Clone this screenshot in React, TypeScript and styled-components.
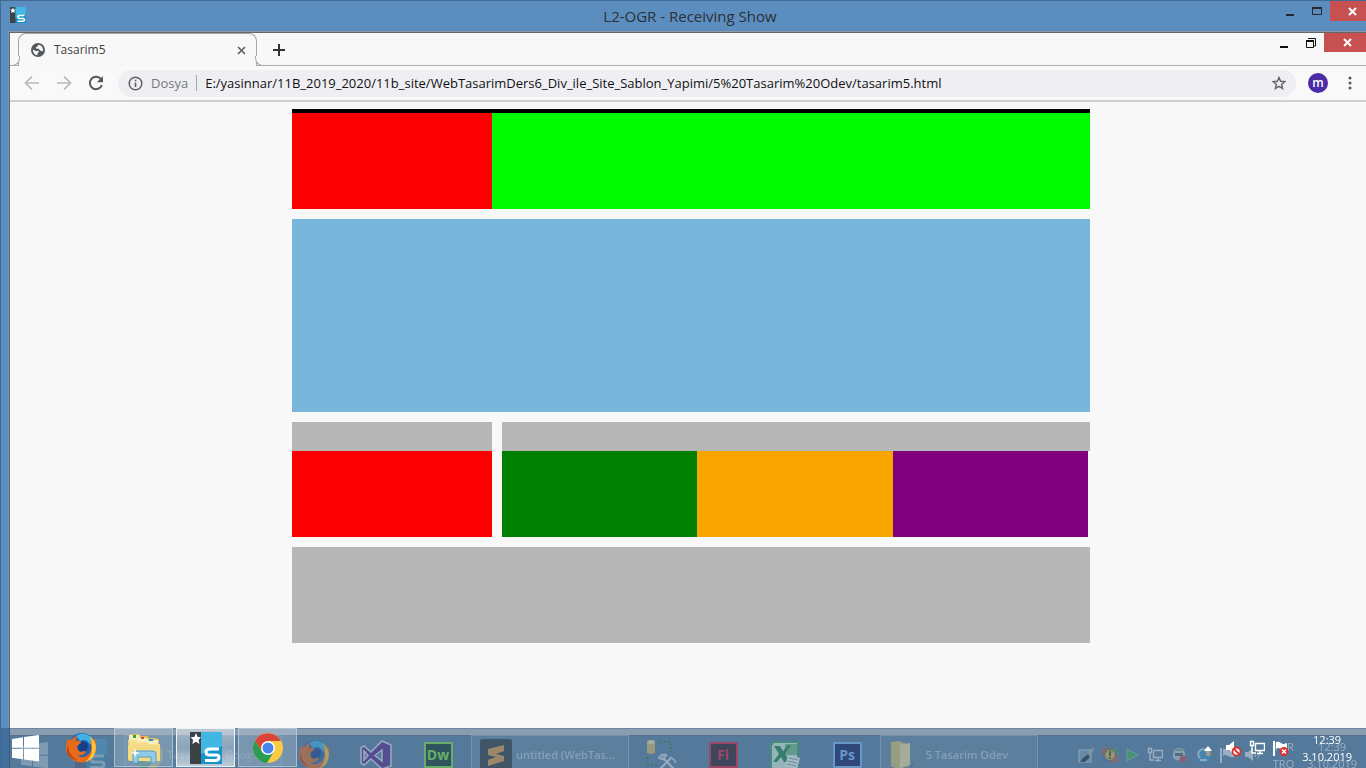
import React from 'react';
import styled, { createGlobalStyle, css } from 'styled-components';

const GlobalStyle = createGlobalStyle`
  * { box-sizing: border-box; }
  body {
    margin: 0;
    background: #5b8ebf;
    font-family: 'Open Sans', 'Noto Sans', sans-serif;
    overflow: hidden;
  }
  button {
    border: 0;
    padding: 0;
    margin: 0;
    background: none;
    font: inherit;
    color: inherit;
  }
  svg { display: block; flex: none; }
`;

/* ---------- Outer window ---------- */

const Desktop = styled.div`
  position: relative;
  display: flex;
  flex-direction: column;
  height: 100vh;
  background: #5b8ebf;
  border-top: 1px solid #416a95;
  border-left: 1px solid #416a95;
  overflow: hidden;
`;

const TitleBar = styled.header`
  display: grid;
  grid-template-columns: 1fr auto 1fr;
  flex: none;
  height: 30px;
  padding-left: 9px;
`;

const TitleIcon = styled.span`
  padding-top: 6px;
`;

const Title = styled.h1`
  margin: 0;
  padding-left: 4px;
  font-size: 15px;
  font-weight: 400;
  line-height: 30px;
  color: #2b3036;
`;

const WindowButtons = styled.div<{ $inner?: boolean }>`
  display: flex;
  justify-content: flex-end;
  align-items: flex-start;
  margin-left: auto;
  color: ${p => (p.$inner ? '#111' : '#24282e')};
`;

const WindowButton = styled.button<{ $inner?: boolean }>`
  display: flex;
  align-items: center;
  justify-content: center;
  width: 27px;
  height: ${p => (p.$inner ? 19 : 20)}px;
`;

const CloseButton = styled(WindowButton)`
  width: ${p => (p.$inner ? 42 : 36)}px;
  padding-left: ${p => (p.$inner ? 4 : 9)}px;
  background: #c75050;
  color: #fff;
`;

/* ---------- Browser ---------- */

const Browser = styled.section`
  display: flex;
  flex-direction: column;
  flex: 1;
  min-height: 0;
  margin-left: 7px;
  padding: 1px 0 0 1px;
  border-top: 1px solid #8c9aa6;
  border-left: 1px solid #7793b0;
  background: #666;
`;

const TabStrip = styled.div`
  display: flex;
  flex: none;
  height: 33px;
  background: #f8f8f8;
  box-shadow: inset 0 -1px #adadad;
`;

const Tab = styled.div`
  position: relative;
  display: flex;
  align-items: center;
  width: 239px;
  margin-left: 8px;
  padding: 0 10px 0 12px;
  border: 1px solid #a6a6a6;
  border-bottom: 0;
  border-radius: 8px 8px 0 0;
  background: #f8f8f8;
  color: #5f6368;

  &::before,
  &::after {
    content: '';
    position: absolute;
    bottom: 0;
    width: 9px;
    height: 9px;
    border-bottom: 1px solid #a6a6a6;
    background: #f8f8f8;
  }
  &::before {
    left: -9px;
    border-right: 1px solid #a6a6a6;
    border-bottom-right-radius: 8px;
  }
  &::after {
    right: -9px;
    border-left: 1px solid #a6a6a6;
    border-bottom-left-radius: 8px;
  }
`;

const TabTitle = styled.span`
  flex: 1;
  padding-left: 9px;
  font-size: 12px;
  line-height: 16px;
  color: #3c4043;
`;

const NewTab = styled.button`
  display: flex;
  align-items: center;
  margin-left: 16px;
  color: #333;
`;

const Toolbar = styled.nav`
  display: flex;
  align-items: center;
  flex: none;
  height: 36px;
  padding: 0 14px;
  border-bottom: 2px solid #d0d0d0;
  background: #f9f9f9;
`;

const NavButtons = styled.div`
  display: flex;
  gap: 16px;
  margin-right: 14px;
`;

const NavButton = styled.button<{ $muted?: boolean }>`
  color: ${p => (p.$muted ? '#b6b8ba' : '#55585c')};
`;

const Omnibox = styled.div`
  display: flex;
  align-items: center;
  flex: 1;
  height: 27px;
  margin-right: 12px;
  padding: 0 10px;
  border-radius: 14px;
  background: #efeff3;
  color: #5f6368;
`;

const Scheme = styled.label`
  margin-left: 8px;
  padding-right: 8px;
  border-right: 1px solid #a5a7aa;
  font-size: 13px;
  line-height: 16px;
  color: #74777b;
`;

const Address = styled.input`
  flex: 1;
  min-width: 0;
  padding: 0 0 0 8px;
  border: 0;
  outline: 0;
  background: transparent;
  font: 13px/18px 'Open Sans', 'Noto Sans', sans-serif;
  color: #111;
`;

const Avatar = styled.button`
  width: 20px;
  height: 20px;
  margin-right: 20px;
  border-radius: 50%;
  background: #4d2aa6;
  font-size: 12px;
  font-weight: 600;
  line-height: 18px;
  color: #fff;
`;

const Page = styled.main`
  flex: 1;
  min-height: 0;
  padding: 7px 0 0 6px;
  background: #f8f8f8;
`;

const Site = styled.div`
  display: flex;
  flex-direction: column;
  gap: 10px;
  width: 100%;
  max-width: 798px;
  margin: 0 auto;
`;

const SiteHeader = styled.div`
  display: flex;
  border-top: 4px solid #000;
`;

const Block = styled.div<{ $color: string; $height: number }>`
  height: ${p => p.$height}px;
  background: ${p => p.$color};
`;

const SideColumn = styled.div`
  flex: 0 0 200px;
`;

const MainColumn = styled.div`
  flex: 1;
`;

const Columns = styled.div`
  display: flex;
  gap: 10px;
`;

const ColorRow = styled.div`
  display: grid;
  grid-template-columns: repeat(3, 1fr);
  padding-right: 2px;
`;

/* ---------- Taskbar ---------- */

const Taskbar = styled.footer`
  position: absolute;
  inset: auto 0 0 -1px;
  height: 40px;
  overflow: hidden;
  background: linear-gradient(#70859e 1px, #899db1 1px 7px, #52728f 7px 8px, #55799a 8px);
`;

const EdgeShade = styled.span`
  position: absolute;
  inset: 0 auto 0 0;
  width: 10px;
  border-right: 1px solid #405b76;
  background: #41709f;
`;

const Layer = styled.div<{ $ghost?: boolean }>`
  position: absolute;
  display: flex;
  inset: 0;
  color: #fff;
  ${p =>
    p.$ghost &&
    css`
      inset: 7px 0 -7px;
      padding-left: 9px;
      opacity: 0.5;
    `}
`;

const StartButton = styled.button<{ $ghost?: boolean }>`
  display: flex;
  align-items: center;
  justify-content: center;
  width: ${p => (p.$ghost ? 51 : 50)}px;
  opacity: ${p => (p.$ghost ? 0.5 : 1)};
`;

const Slot = styled.button<{ $state?: 'open' | 'active'; $faint?: boolean }>`
  display: flex;
  align-items: center;
  justify-content: center;
  width: 62px;
  opacity: ${p => (p.$faint ? 0.5 : 1)};
  ${p =>
    p.$state &&
    css`
      width: 59px;
      margin: 0 1px 1px 2px;
      border: 1px solid ${p.$state === 'active' ? '#eef3f7' : 'rgba(205, 220, 232, 0.6)'};
      background: ${p.$state === 'active'
        ? 'linear-gradient(rgba(255,255,255,.45), rgba(255,255,255,.3) 50%, rgba(255,255,255,.6))'
        : 'rgba(200, 215, 230, 0.28)'};
    `}
`;

const TaskButton = styled.button<{ $faint?: boolean }>`
  display: flex;
  align-items: center;
  gap: 4px;
  width: 158px;
  margin: 0 1px 0 2px;
  padding: 0 8px;
  border: 1px solid rgba(190, 210, 228, 0.55);
  background: rgba(150, 175, 195, 0.25);
  font-size: 11px;
  font-weight: 600;
  line-height: 16px;
  color: #b4c6d6;
  white-space: nowrap;
  opacity: ${p => (p.$faint ? 0.6 : 1)};
`;

const Tray = styled.div<{ $ghost?: boolean }>`
  display: flex;
  align-items: center;
  gap: 8px;
  margin-left: auto;
  padding-right: ${p => (p.$ghost ? 9 : 14)}px;
  opacity: ${p => (p.$ghost ? 0.8 : 1)};
`;

const TrayIcons = styled.div`
  display: flex;
  align-items: center;
  gap: 8px;
  margin-right: 5px;
`;

const Overflow = styled.button`
  margin-right: 5px;
`;

const TrayText = styled.div`
  font-size: 11px;
  line-height: 17px;
  text-align: center;
`;

const Clock = styled(TrayText)`
  margin-left: 5px;
`;

/* ---------- Icons ---------- */

const Svg = ({ w = 16, h = w, box, children }: { w?: number; h?: number; box?: string; children: React.ReactNode }) => (
  <svg width={w} height={h} viewBox={box || `0 0 ${w} ${h}`} fill="none" aria-hidden="true">
    {children}
  </svg>
);

const SchoolIcon = ({ size = 32 }: { size?: number }) => (
  <Svg w={size} box="0 0 32 32">
    <path d="M0 0H12V32H0z" fill="#3d4247" />
    <path d="M11 0H32V32H11z" fill="#1594ca" />
    <path d="M11 0H32V14L11 22z" fill="#43b7e4" />
    <path d="M29 17H19.500Q16 17 16 20T19.500 23H26Q29 23 29 25.500T26 28.500H15" stroke="#fff" strokeWidth="3" />
    <path d="M6 1L7.600 5 11 5.200 8.500 8 9.500 12 6 9.800 2.200 12 3.200 8 0.500 5.200 4.400 5z" fill="#fff" />
  </Svg>
);

const CrossIcon = ({ size = 9, width = 2 }: { size?: number; width?: number }) => (
  <Svg w={size} box="0 0 9 9">
    <path d="M1 1L8 8M8 1L1 8" stroke="currentColor" strokeWidth={width} />
  </Svg>
);

const MinimizeIcon = () => (
  <Svg w={8} h={10}><path d="M0 9H8" stroke="currentColor" strokeWidth="2" /></Svg>
);

const MaximizeIcon = () => (
  <Svg w={10} h={8}><path d="M.5 1V7.500H9.500V1" stroke="currentColor" /><path d="M0 1H10" stroke="currentColor" strokeWidth="2" /></Svg>
);

const RestoreIcon = () => (
  <Svg w={10}><path d="M2 .5H9.500V8H8M.5 3V9.500H7.500V3" stroke="currentColor" /><path d="M0 3H8" stroke="currentColor" strokeWidth="2" /></Svg>
);

const GlobeIcon = () => (
  <Svg w={14} box="0 0 14 14">
    <circle cx="7" cy="7" r="7" fill="#55595e" />
    <path d="M2 6.500L5.200 8.300 7 7.600 8 9 6.500 10.200V12.300C3.800 12 1.800 9.600 2 6.500zM7.500 1.800L6.500 3.500 4.800 4.300 5.500 5.800 8 5.700 9 7.500 11.900 8.200C12.500 5.200 10.700 2.200 7.500 1.800z" fill="#f8f8f8" />
  </Svg>
);

const ArrowIcon = ({ right }: { right?: boolean }) => (
  <Svg w={16}>
    <path d={right ? 'M1 8H14M8 1.500L14.500 8 8 14.500' : 'M15 8H2M8 1.500L1.500 8 8 14.500'} stroke="currentColor" strokeWidth="1.700" />
  </Svg>
);

const ReloadIcon = () => (
  <Svg w={16}>
    <path d="M13 4.200A6.200 6.200 0 1 0 13.900 10" stroke="currentColor" strokeWidth="2" />
    <path d="M15 1V7.200H8.800z" fill="currentColor" />
  </Svg>
);

const InfoIcon = () => (
  <Svg w={15} box="0 0 15 15">
    <circle cx="7.500" cy="7.500" r="6.300" stroke="currentColor" strokeWidth="1.500" />
    <path d="M7.500 6.500V11M7.500 3.700V5.300" stroke="currentColor" strokeWidth="1.600" />
  </Svg>
);

const StarIcon = () => (
  <Svg w={14}>
    <path d="M7 1.500L8.600 5.300 12.800 5.700 9.600 8.400 10.600 12.500 7 10.300 3.400 12.500 4.400 8.400 1.200 5.700 5.400 5.300z" stroke="currentColor" strokeWidth="1.400" />
  </Svg>
);

const DotsIcon = () => (
  <Svg w={4} h={14}>
    <circle cx="2" cy="2" r="1.500" fill="#54575b" /><circle cx="2" cy="7" r="1.500" fill="#54575b" /><circle cx="2" cy="12" r="1.500" fill="#54575b" />
  </Svg>
);

const WindowsIcon = () => (
  <Svg w={27} box="0 0 27 27">
    <path d="M0 4L11 2.300V12.700H0zM12 2.100L27 0V12.700H12zM0 13.700H11V24.300L0 22.800zM12 13.700H27V26.500L12 24.500z" fill="#fff" />
  </Svg>
);

const FirefoxIcon = () => (
  <Svg w={32} box="0 0 32 32">
    <circle cx="17" cy="14" r="13" fill="#1f63b5" />
    <path d="M11 4Q17-1 25 4Q28 9 25 13Q22 6 15 9z" fill="#3fb3e6" />
    <path d="M14 11Q19 7 23 12Q24 17 19 20L13 19z" fill="#173f86" />
    <path d="M3 7Q5 9 7 7Q10 4 12 4L11 9Q16 8 16 11L12 14Q12 19 16 20Q20 18 21 20Q17 25 12 23Q18 28 24 22Q28 17 25 9Q30 11 30 5Q34 20 25 28Q17 33 8 28Q-3 20 3 7z" fill="#e66a19" />
    <path d="M25 4Q30 8 31 15Q31 27 20 30Q28 24 27 15Q27 9 25 4z" fill="#fbc43b" />
    <path d="M3 13Q3 23 12 28Q-1 25 3 13z" fill="#c73a12" />
  </Svg>
);

const ExplorerIcon = () => (
  <Svg w={34} h={32}>
    <path d="M2 4L3 2H12L14 4H21L22 6H30L32 8V26H2z" fill="#dfbd5c" />
    <path d="M2 3H12L13 6H20L21 8H31V12H2z" fill="#f9eec0" />
    <path d="M6 3H9V6H6z" fill="#2fa82f" /><path d="M14 5H17V7H14z" fill="#d34734" /><path d="M22 7H26V9H22z" fill="#2b8fd3" />
    <path d="M1 8H9L11 10H20L22 12H33V29H3z" fill="#f6df8e" />
    <path d="M1 13H33V28Q33 29 31 29H3Q1 29 1 27z" fill="#f3da83" />
    <path d="M6 22Q6 19 9 19H26Q29 19 29 22V31H24V25H11V31H6z" fill="#8dcbe6" stroke="#5b9dc2" />
    <path d="M8 16L9 20 13 21 9 22 8 26 7 22 4 21 7 20z" fill="#fff" />
  </Svg>
);

const ChromeIcon = () => (
  <Svg w={30} box="0 0 30 30">
    <circle cx="15" cy="15" r="15" fill="#fccb44" />
    <path d="M2 7.500A15 15 0 0 1 28 8H15L9 18.500z" fill="#d9453a" />
    <path d="M2 7.500A15 15 0 0 0 14 30L21 18.500H9z" fill="#2c9c51" />
    <circle cx="15" cy="15" r="7" fill="#fff" /><circle cx="15" cy="15" r="5.500" fill="#4585ee" />
  </Svg>
);

const VisualStudioIcon = () => (
  <Svg w={32} h={30}>
    <path d="M22 1L31 5V26L22 29 11 19 4 25 1 23V8L4 6 11 12zM22 10L15 15.500 22 21zM4 11V20L8 15.500z" fill="#522487" stroke="#e2dceb" strokeWidth="1.500" fillRule="evenodd" />
  </Svg>
);

const AdobeTile = styled.span<{ $edge: string; $fill: string }>`
  display: flex;
  align-items: center;
  justify-content: center;
  width: 29px;
  height: 26px;
  border: 2px solid ${p => p.$edge};
  background: ${p => p.$fill};
  font-size: 14px;
  font-weight: 700;
  line-height: 20px;
  color: ${p => p.$edge};
`;

const SublimeIcon = () => (
  <Svg w={32} h={32}>
    <rect width="32" height="32" rx="2" fill="#2e3338" />
    <path d="M8 10L24 6V12L16 15 24 17V22L8 27V21L16 18 8 16z" fill="#e3973a" />
  </Svg>
);

const ToolsIcon = () => (
  <Svg w={32} h={32}>
    <path d="M2 3Q6 0 10 3V14Q6 16 2 14z" fill="#dcb860" /><ellipse cx="6" cy="3" rx="4" ry="2" fill="#f5e29c" />
    <path d="M15 3H26V13M2 18V26H14" stroke="#237f35" strokeWidth="2" strokeDasharray="2 2" />
    <path d="M18 19L30 31M26 19L14 31" stroke="#d8dfe5" strokeWidth="2" /><path d="M13 19Q17 13 22 16L18 21zM25 18L29 20 31 24" fill="#aeb9c4" stroke="#eef2f5" />
  </Svg>
);

const ExcelIcon = () => (
  <Svg w={30} h={29}>
    <path d="M3 1H28V28H1V5z" fill="#d5eedb" stroke="#3aa05b" strokeWidth="2" />
    <path d="M15 3H27V14H15z" fill="#70bd84" />
    <path d="M4 5H10L13 10 18 4H21L15 13 20 21H14L11 16 7 21H3L9 13z" fill="#16863b" />
    <path d="M18 14L30 17 27 28 15 25z" fill="#f4f8f5" /><path d="M19 17L28 19M18 20L27 22M17 23L26 25" stroke="#79a486" />
  </Svg>
);

const FolderIcon = () => (
  <Svg w={27} h={30}>
    <path d="M2 2L10 1 20 5V26L9 29 2 26z" fill="#e2c768" /><path d="M10 5L21 3V25L11 28z" fill="#f5e29b" /><path d="M2 2L11 6V29L2 26z" fill="#dbc06b" /><path d="M22 26L26 22 22 28z" fill="#46545f" />
  </Svg>
);

const SpeakerIcon = ({ muted }: { muted?: boolean }) => (
  <Svg w={16}>
    <path d="M1 5H4L9 1V14L4 10H1z" fill="#fff" />
    {muted ? (
      <><circle cx="11.500" cy="11.500" r="4" fill="#fff" stroke="#df3030" strokeWidth="1.800" /><path d="M9 9L14 14" stroke="#df3030" strokeWidth="1.800" /></>
    ) : (
      <path d="M11 5Q13 7.500 11 10M13 3Q17 7.500 13 12" stroke="#fff" />
    )}
  </Svg>
);

const NetworkIcon = () => (
  <Svg w={16}>
    <path d="M6.500 3.500H15.500V10.500H6.500zM8 13.500H14M11 11V13" stroke="#fff" strokeWidth="1.400" />
    <path d="M1.500 1.500H4.500V5.500H1.500zM3 6V13H7" stroke="#fff" strokeWidth="1.400" />
  </Svg>
);

const FlagIcon = ({ alert }: { alert?: boolean }) => (
  <Svg w={16}>
    <path d="M1 1V16" stroke="#fff" strokeWidth="2" /><path d="M3 2Q6 1 8 3T14 3V10Q11 11 8 9T3 9z" fill="#fff" />
    {alert && <><circle cx="11" cy="11.500" r="4.500" fill="#e02f2f" /><path d="M9 9.500L13 13.500M13 9.500L9 13.500" stroke="#fff" strokeWidth="1.500" /></>}
  </Svg>
);

const UpIcon = () => <Svg w={8} h={5}><path d="M0 5L4 0 8 5z" fill="#fff" /></Svg>;

const PaintIcon = () => (
  <Svg w={16}><path d="M1 3H13V15H1z" fill="#7fa9c7" stroke="#e4e8eb" /><path d="M15 0L8 8 10 10 16 3z" fill="#c4b8a5" /><path d="M10 7L5 11 2 15H7L12 10z" fill="#10171d" /></Svg>
);

const WarningIcon = () => (
  <Svg w={16}><path d="M0 1H8V8H0z" fill="#c95435" /><path d="M8 1H16V8H8z" fill="#3d9b55" /><path d="M0 8H8V15H0z" fill="#416ec0" /><path d="M8 8H16V15H8z" fill="#d55439" /><circle cx="8" cy="8" r="5.500" fill="#f3bf34" stroke="#735b20" /><path d="M8 4V9M8 10V12" stroke="#493e24" strokeWidth="2" /></Svg>
);

const PlayIcon = () => <Svg w={13} h={14}><path d="M1 1L12 7 1 13z" fill="#36b84b" stroke="#86d48f" /></Svg>;

const RobotIcon = () => (
  <Svg w={16}><path d="M2 7Q2 1 8 1T14 7V11Q8 16 2 11z" fill="#d3dce0" /><path d="M4 6H12V9H4z" fill="#476252" /><path d="M3 4Q8 0 13 4z" fill="#70a75d" /><circle cx="12" cy="12" r="3.500" fill="#d34343" /></Svg>
);

const SyncIcon = () => (
  <Svg w={17} h={16}><path d="M2 1H16V15H2z" fill="#2d94d4" /><path d="M10 1H16V9H11z" fill="#f1a536" /><path d="M5 11A5 5 0 1 1 13 9M5 13H12" stroke="#e2f1f8" strokeWidth="2" /></Svg>
);

/* ---------- Screen ---------- */

const GhostTaskbar = () => (
  <Layer $ghost aria-hidden="true">
    <StartButton $ghost tabIndex={-1}><WindowsIcon /></StartButton>
    <Slot $faint tabIndex={-1}><SchoolIcon /></Slot>
    <TaskButton $faint tabIndex={-1}><ChromeIcon />Tasarim5 - Goog...</TaskButton>
    <Slot tabIndex={-1}><FirefoxIcon /></Slot>
    <Slot tabIndex={-1}><VisualStudioIcon /></Slot>
    <Slot tabIndex={-1}><AdobeTile $edge="#7be036" $fill="#0b3023">Dw</AdobeTile></Slot>
    <TaskButton tabIndex={-1}><SublimeIcon />untitled (WebTas...</TaskButton>
    <Slot tabIndex={-1}><ToolsIcon /></Slot>
    <Slot tabIndex={-1}><AdobeTile $edge="#de1735" $fill="#29151f">Fl</AdobeTile></Slot>
    <Slot tabIndex={-1}><ExcelIcon /></Slot>
    <Slot tabIndex={-1}><AdobeTile $edge="#78b7f4" $fill="#0d1759">Ps</AdobeTile></Slot>
    <TaskButton tabIndex={-1}><FolderIcon />&nbsp; 5 Tasarim Odev</TaskButton>
    <Tray $ghost>
      <TrayIcons>
        <PaintIcon /><WarningIcon /><PlayIcon /><NetworkIcon /><RobotIcon /><SyncIcon /><FlagIcon /><SpeakerIcon />
      </TrayIcons>
      <TrayText>TUR<br />TRQ</TrayText>
      <Clock>12:39<br />3.10.2019</Clock>
    </Tray>
  </Layer>
);

export default function App() {
  return (
    <Desktop>
      <GlobalStyle />
      <TitleBar>
        <TitleIcon><SchoolIcon size={16} /></TitleIcon>
        <Title>L2-OGR - Receiving Show</Title>
        <WindowButtons>
          <WindowButton aria-label="Minimize"><MinimizeIcon /></WindowButton>
          <WindowButton aria-label="Maximize"><MaximizeIcon /></WindowButton>
          <CloseButton aria-label="Close"><CrossIcon /></CloseButton>
        </WindowButtons>
      </TitleBar>

      <Browser>
        <TabStrip>
          <Tab>
            <GlobeIcon />
            <TabTitle>Tasarim5</TabTitle>
            <button aria-label="Close tab"><CrossIcon width={1.7} /></button>
          </Tab>
          <NewTab aria-label="New tab">
            <Svg w={12}><path d="M6 0V12M0 6H12" stroke="currentColor" strokeWidth="2" /></Svg>
          </NewTab>
          <WindowButtons $inner>
            <WindowButton $inner aria-label="Minimize browser"><MinimizeIcon /></WindowButton>
            <WindowButton $inner aria-label="Restore browser"><RestoreIcon /></WindowButton>
            <CloseButton $inner aria-label="Close browser"><CrossIcon /></CloseButton>
          </WindowButtons>
        </TabStrip>

        <Toolbar>
          <NavButtons>
            <NavButton $muted aria-label="Back"><ArrowIcon /></NavButton>
            <NavButton $muted aria-label="Forward"><ArrowIcon right /></NavButton>
            <NavButton aria-label="Reload"><ReloadIcon /></NavButton>
          </NavButtons>
          <Omnibox>
            <InfoIcon />
            <Scheme htmlFor="address">Dosya</Scheme>
            <Address
              id="address"
              spellCheck={false}
              defaultValue="E:/yasinnar/11B_2019_2020/11b_site/WebTasarimDers6_Div_ile_Site_Sablon_Yapimi/5%20Tasarim%20Odev/tasarim5.html"
            />
            <button aria-label="Bookmark"><StarIcon /></button>
          </Omnibox>
          <Avatar>m</Avatar>
          <button aria-label="Menu"><DotsIcon /></button>
        </Toolbar>

        <Page>
          <Site>
            <SiteHeader>
              <SideColumn><Block $color="#fb0000" $height={96} /></SideColumn>
              <MainColumn><Block $color="#00fb00" $height={96} /></MainColumn>
            </SiteHeader>
            <Block $color="#78b6db" $height={193} />
            <Columns>
              <SideColumn>
                <Block $color="#b7b7b7" $height={29} />
                <Block $color="#fb0000" $height={86} />
              </SideColumn>
              <MainColumn>
                <Block $color="#b7b7b7" $height={29} />
                <ColorRow>
                  <Block $color="#008000" $height={86} />
                  <Block $color="#f8a500" $height={86} />
                  <Block $color="#800080" $height={86} />
                </ColorRow>
              </MainColumn>
            </Columns>
            <Block as="footer" $color="#b7b7b7" $height={96} />
          </Site>
        </Page>
      </Browser>

      <Taskbar>
        <EdgeShade />
        <GhostTaskbar />
        <Layer>
          <StartButton aria-label="Start"><WindowsIcon /></StartButton>
          <Slot aria-label="Firefox"><FirefoxIcon /></Slot>
          <Slot $state="open" aria-label="Files"><ExplorerIcon /></Slot>
          <Slot $state="active" aria-label="Classroom"><SchoolIcon /></Slot>
          <Slot $state="open" aria-label="Chrome"><ChromeIcon /></Slot>
          <Tray>
            <Overflow aria-label="Show hidden icons"><UpIcon /></Overflow>
            <SpeakerIcon muted /><NetworkIcon /><FlagIcon alert />
            <Clock>12:39<br />3.10.2019</Clock>
          </Tray>
        </Layer>
      </Taskbar>
    </Desktop>
  );
}
